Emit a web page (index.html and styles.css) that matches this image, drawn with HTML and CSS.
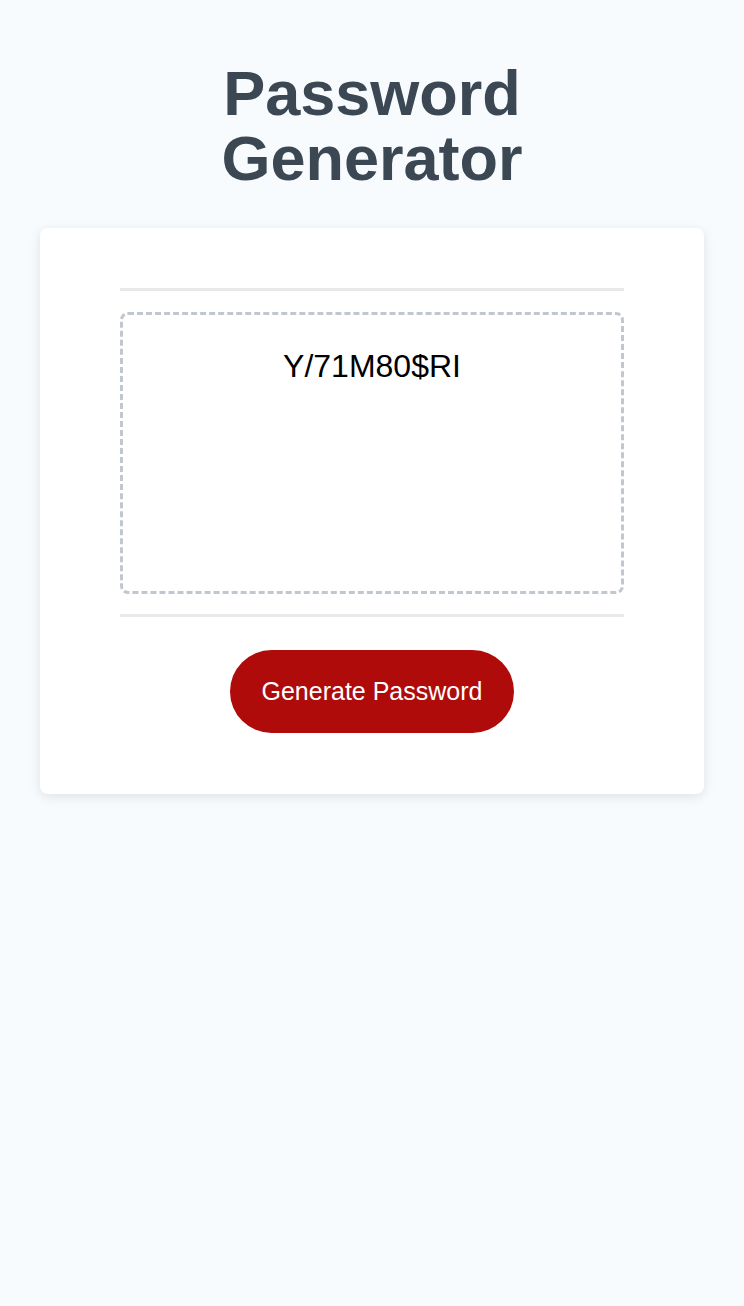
FILE: index.html
```html
<!DOCTYPE html>
<html lang="en">
<head>
<meta charset="UTF-8">
<title>Password Generator</title>
<link rel="stylesheet" href="styles.css">
</head>
<body>
<div class="wrapper">
  <header>
    <h1 class="title">Password<br>Generator</h1>
  </header>
  <div class="card">
    <div class="card-header"></div>
    <div class="card-body">
      <div class="password" id="password">Y/71M80$RI</div>
    </div>
    <div class="card-footer">
      <button class="btn" id="generate" type="button">Generate Password</button>
    </div>
  </div>
</div>
</body>
</html>
```

FILE: styles.css
```css
*, *::before, *::after {
  box-sizing: border-box;
}

html, body {
  margin: 0;
  padding: 0;
}

body {
  font-family: "Liberation Sans", Arial, Helvetica, sans-serif;
  background-color: #f8fbfd;
  min-height: 1306px;
}

.wrapper {
  padding: 61px 40px 0;
}

.title {
  margin: 0 0 37px;
  text-align: center;
  font-size: 63px;
  line-height: 65px;
  font-weight: 700;
  color: #3b4753;
}

.card {
  background-color: #ffffff;
  border-radius: 8px;
  box-shadow: 0 3px 12px rgba(0, 0, 0, 0.1);
  padding: 60px 80px 61px;
  color: #3b4753;
}

.card-header::after,
.card-footer::before {
  content: "";
  display: block;
  width: 100%;
  height: 3px;
  background: #e7e9eb;
}

.password {
  margin: 21px 0 20px;
  height: 282px;
  border: 3px dashed #c0c7cf;
  border-radius: 8px;
  padding: 33px 15px 0;
  font-size: 32px;
  text-align: center;
  color: #000000;
}

.card-footer {
  display: flex;
  flex-direction: column;
  align-items: center;
}

.btn {
  margin-top: 33px;
  height: 83px;
  padding: 0 32px;
  border: none;
  border-radius: 42px;
  background-color: #b00b0b;
  color: #ffffff;
  font-family: "Liberation Sans", Arial, Helvetica, sans-serif;
  font-size: 25px;
  line-height: 25px;
  cursor: pointer;
}
```
